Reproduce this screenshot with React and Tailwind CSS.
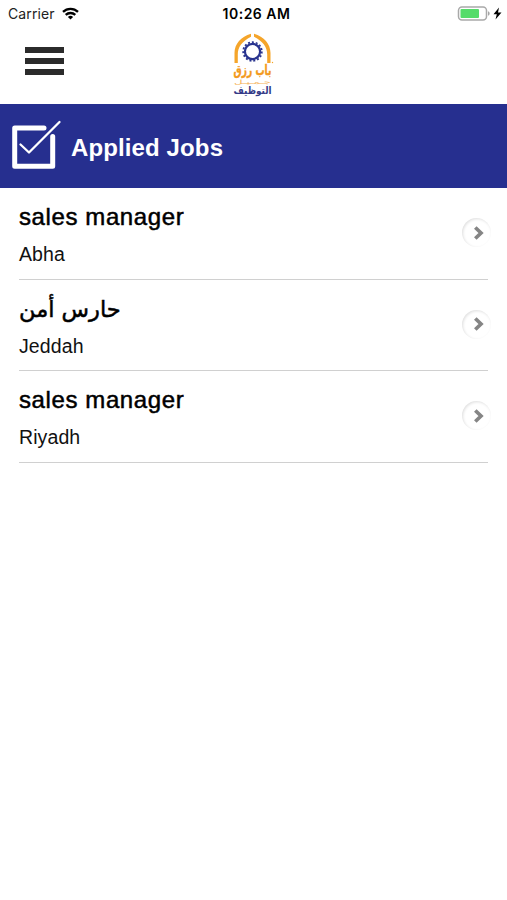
const jobs = [
    { title: "sales manager", city: "Abha" },
    { title: "حارس أمن", city: "Jeddah", arabic: true },
    { title: "sales manager", city: "Riyadh" },
];

function StatusBar() {
    return (
        <div className="grid grid-cols-3 items-center h-7 pl-2 pr-[5px] text-[#222]">
            <div className="flex items-center gap-[7px]">
                <span className="font-['Inter'] text-[14px] leading-none tracking-[0.1px]">Carrier</span>
                <svg width="17" height="13" viewBox="0 0 17 13" fill="none" stroke="#000" strokeWidth="2.3" className="-mt-[2px]">
                    <path d="M1 4.9a10.8 10.8 0 0 1 15 0" />
                    <path d="M3.7 7.9a7 7 0 0 1 9.6 0" />
                    <path d="M8.5 12.6 5.9 10a3.8 3.8 0 0 1 5.2 0z" fill="#000" stroke="none" />
                </svg>
            </div>
            <span className="pl-[3px] text-center font-['Inter'] font-semibold text-[14px] leading-none tracking-[0.5px] whitespace-nowrap text-black">10:26 AM</span>
            <div className="flex items-center justify-end gap-[3px] -mt-[2px]">
                <svg width="33" height="15" viewBox="0 0 33 15">
                    <rect x="1.5" y="1" width="28" height="13" rx="3.5" fill="#fff" stroke="#a9a9a9" strokeWidth="1.5" />
                    <rect x="3.5" y="3" width="18.5" height="9" rx="1" fill="#55dc6a" />
                    <path d="M31 5.3v4.400q1.700-.5 1.700-2.200t-1.700-2.200z" fill="#a5a5a5" />
                </svg>
                <svg width="9" height="13" viewBox="0 0 9 13">
                    <path d="M6 .5.5 7.300h3.300L2.500 12.500 8.500 5.600H5z" fill="#000" />
                </svg>
            </div>
        </div>
    );
}

function Logo() {
    return (
        <svg width="42" height="68" viewBox="0 0 42 68" direction="rtl" overflow="visible">
            <path d="M1.500 30V20C1.500 11 8 3.500 18 .8V3.800C9 8.500 4.800 14 4.800 21.500V30z" fill="#f5a52a" />
            <path d="M37.500 30V20C37.500 11 31 3.500 21 .8V3.800C30 8.500 34.200 14 34.200 21.500V30z" fill="#f5a52a" />
            <circle cx="19.500" cy="18.500" r="7.600" fill="#fff" stroke="#29348f" strokeWidth="2.200" />
            <circle cx="19.500" cy="18.500" r="9.300" fill="none" stroke="#29348f" strokeWidth="1.800" strokeDasharray="2 1.900" />
            <g textAnchor="middle">
                <text transform="translate(19.500 42) scale(.9 1)" textLength="42" lengthAdjust="spacingAndGlyphs" fill="#f39a1e" stroke="#f39a1e" strokeWidth=".4" className="font-['DejaVu_Sans'] font-bold text-[14px]">باب رزق</text>
                <text transform="translate(19.500 51)" textLength="37" lengthAdjust="spacingAndGlyphs" fill="#f6b55c" className="font-['DejaVu_Sans'] text-[6px]">جـمـيـل</text>
                <text transform="translate(19.500 60.500)" textLength="38" lengthAdjust="spacingAndGlyphs" fill="#343b87" className="font-['DejaVu_Sans'] font-bold text-[10.5px]">التوظيف</text>
            </g>
            <circle cx="39.500" cy="29.500" r=".7" fill="#f5a52a" />
        </svg>
    );
}

function Header() {
    return (
        <header className="grid grid-cols-3 h-[76px] items-start">
            <button aria-label="Menu" className="flex flex-col gap-[5px] w-[39px] ml-[25px] mt-[19px]">
                <span className="h-[6px] w-full bg-[#2b2b2b]" />
                <span className="h-[6px] w-full bg-[#2b2b2b]" />
                <span className="h-[6px] w-full bg-[#2b2b2b]" />
            </button>
            <div className="flex justify-center pt-[5px]">
                <Logo />
            </div>
        </header>
    );
}

function TitleBar() {
    return (
        <div className="flex items-center h-[84px] bg-[#262f8f] pl-3">
            <svg width="50" height="50" viewBox="0 0 50 50" fill="none" stroke="#fff" strokeLinecap="round" strokeLinejoin="round" className="-mt-[2px]">
                <path d="M32 8H2.700V46.300H40.700V16.500" strokeWidth="5" />
                <path d="M8.500 24.500 17 32.500 47.500 2" strokeWidth="2.300" />
            </svg>
            <h1 className="ml-[9px] mt-[3px] text-[24px] leading-none tracking-[0.12px] font-bold text-white">Applied Jobs</h1>
        </div>
    );
}

function JobRow({ job }) {
    return (
        <li className="flex justify-between h-[91.7px] border-b-[1.5px] border-[#d0d0d0]">
            <div className="pt-[14px]">
                <h2
                    className={
                        job.arabic
                            ? "font-['DejaVu_Sans'] text-[22.500px] leading-[30px] [-webkit-text-stroke:0.5px_#000]"
                            : "text-[24px] leading-[30px] tracking-[0.6px] [-webkit-text-stroke:0.5px_#000]"
                    }
                >
                    {job.title}
                </h2>
                <p className="mt-[11px] text-[19.500px] leading-[22px] tracking-[0.1px] text-[#111]">{job.city}</p>
            </div>
            <span className="mt-[30px] -mr-[3px] flex h-[29px] w-[29px] items-center justify-center rounded-full bg-white shadow-[inset_1px_1px_3px_#dedede]">
                <svg width="12" height="14" viewBox="0 0 12 14" fill="none" stroke="#858585" strokeWidth="3.700" className="ml-[4px]">
                    <path d="M2.300 1.500 8 7 2.300 12.500" />
                </svg>
            </span>
        </li>
    );
}

export default function App() {
    return (
        <main className="min-h-screen bg-white text-black font-['Liberation_Sans',sans-serif]">
            <StatusBar />
            <Header />
            <TitleBar />
            <ul className="mx-[19px]">
                {jobs.map((job, idx) => (
                    <JobRow key={idx} job={job} />
                ))}
            </ul>
        </main>
    );
}
